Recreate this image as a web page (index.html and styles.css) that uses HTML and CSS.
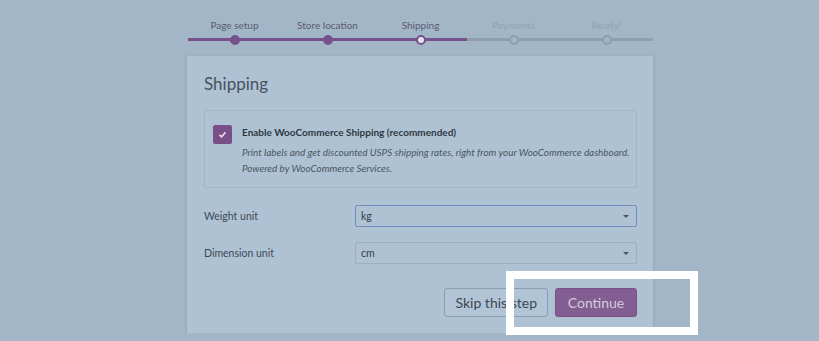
FILE: index.html
```html
<!DOCTYPE html>
<html lang="en">
  <head>
    <meta charset="UTF-8" />
    <title>Shipping setup</title>
    <link rel="stylesheet" href="styles.css">
  </head>
  <body>
    <div class="wizard">
      <ol class="steps">
        <li class="done">Page setup<span class="dot"></span></li>
        <li class="done">Store location<span class="dot"></span></li>
        <li class="active">Shipping<span class="dot"></span></li>
        <li>Payments<span class="dot"></span></li>
        <li>Ready!<span class="dot"></span></li>
      </ol>

      <div class="card">
        <h1 class="title">Shipping</h1>

        <div class="service">
          <span class="checkbox">
            <svg width="9" height="9" viewBox="0 0 9 9"><path d="M1.5 4.8 L3.6 6.8 L7.5 2.2" fill="none" stroke="#e8dfee" stroke-width="1.6"/></svg>
          </span>
          <div class="service-text">
            <div class="service-name">Enable WooCommerce Shipping (recommended)</div>
            <p class="service-desc">Print labels and get discounted USPS shipping rates, right from your WooCommerce dashboard. Powered by WooCommerce Services.</p>
          </div>
        </div>

        <div class="field">
          <label class="field-label">Weight unit</label>
          <div class="select focus">kg<span class="arrow"></span></div>
        </div>
        <div class="field">
          <label class="field-label">Dimension unit</label>
          <div class="select">cm<span class="arrow"></span></div>
        </div>

        <div class="actions">
          <button class="btn">Skip this step</button>
          <button class="btn primary">Continue</button>
        </div>
      </div>
    </div>

    <div class="highlight"></div>
  </body>
</html>
```

FILE: styles.css
```css
body {
  margin: 0;
  background: #a3b6c7;
  font-family: Lato, "Open Sans", sans-serif;
  color: #3c4651;
}
.wizard {
  width: 466px;
  padding-left: 187px;
}
.steps {
  display: flex;
  list-style: none;
  margin: 0;
  padding: 0 0 0 1px;
}
.steps li {
  position: relative;
  width: 93px;
  padding: 18px 0 5px;
  text-align: center;
  font-size: 10px;
  line-height: 15px;
  color: #8fa2b4;
  border-bottom: 3px solid #8e9eac;
}
.steps li.done,
.steps li.active {
  color: #5b5a72;
  border-bottom-color: #76518a;
}
.dot {
  position: absolute;
  left: 42px;
  bottom: -6.5px;
  width: 6px;
  height: 6px;
  border-radius: 50%;
  border: 2px solid #8e9eac;
  background: #a3b6c7;
}
.done .dot {
  border-color: #76518a;
  background: #76518a;
}
.active .dot {
  border-color: #76518a;
  background: #dfe6ee;
}
.card {
  margin-top: 15px;
  padding: 16px 16px 16px 17px;
  background: #aec2d4;
  box-shadow: 0 1px 3px rgba(60, 80, 100, 0.25);
}
.title {
  margin: 0;
  font-size: 17px;
  font-weight: normal;
  line-height: 24px;
  color: #47525d;
}
.service {
  display: flex;
  gap: 10px;
  margin-top: 14px;
  padding: 13px 4px 11px 8px;
  border: 1px solid #a2b5c7;
  border-radius: 2px;
}
.checkbox {
  display: flex;
  align-items: center;
  justify-content: center;
  flex: none;
  width: 19px;
  height: 19px;
  margin-top: 1px;
  border-radius: 2px;
  background: #7a4f88;
}
.service-name {
  font-size: 10px;
  font-weight: bold;
  line-height: 16px;
  color: #2f3842;
}
.service-desc {
  margin: 4px 0 0;
  font-size: 9.9px;
  font-style: italic;
  line-height: 16px;
  color: #4b5661;
}
.field {
  display: flex;
  align-items: center;
  margin-top: 15px;
}
.service + .field {
  margin-top: 17px;
}
.field-label {
  width: 151px;
  font-size: 10.5px;
  color: #3f4a55;
}
.select {
  position: relative;
  flex: 1;
  height: 20px;
  padding-left: 5px;
  border: 1px solid #9cafc1;
  border-radius: 2px;
  font-size: 10.5px;
  line-height: 20px;
  color: #343d47;
}
.select.focus {
  border-color: #6d8fbd;
}
.arrow {
  position: absolute;
  right: 7px;
  top: 9px;
  border-left: 3px solid transparent;
  border-right: 3px solid transparent;
  border-top: 3.5px solid #4c5560;
}
.actions {
  display: flex;
  justify-content: flex-end;
  gap: 7px;
  margin-top: 24px;
}
.btn {
  height: 29px;
  padding: 0 10px;
  border: 1px solid #8c9fb0;
  border-radius: 3px;
  background: #b2c5d6;
  font-family: Lato, "Open Sans", sans-serif;
  font-size: 14px;
  color: #3d4752;
}
.btn.primary {
  width: 82px;
  background: #835e92;
  border-color: #775184;
  color: #d2cddb;
}
.highlight {
  position: absolute;
  left: 506px;
  top: 271px;
  width: 176px;
  height: 48px;
  border: 8px solid #ffffff;
}
```
